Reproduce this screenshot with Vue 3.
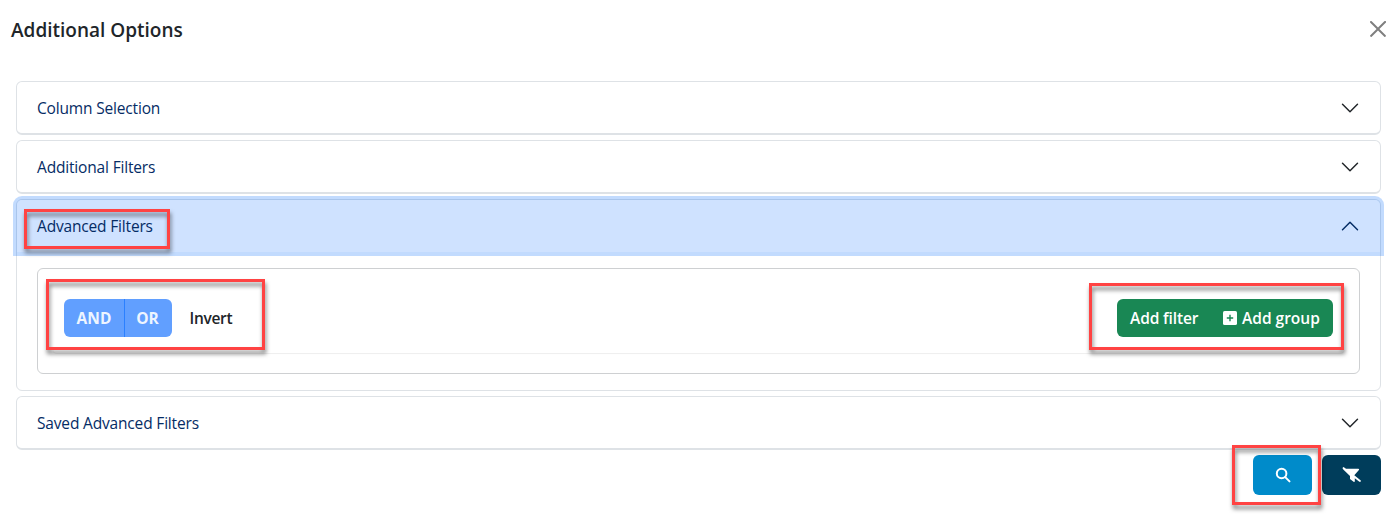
<script setup>
const before = ['Column Selection', 'Additional Filters']
</script>

<template>
  <main class="dialog">
    <header class="head">
      <h1>Additional Options</h1>
      <svg class="close" viewBox="0 0 16 16"><path d="M.3.3a1 1 0 0 1 1.4 0L8 6.6 14.3.3a1 1 0 1 1 1.4 1.4L9.4 8l6.3 6.3a1 1 0 0 1-1.4 1.4L8 9.4l-6.3 6.3a1 1 0 0 1-1.4-1.4L6.6 8 .3 1.7a1 1 0 0 1 0-1.4z" /></svg>
    </header>

    <section class="accordion">
      <div v-for="title in before" :key="title" class="item closed">
        <span>{{ title }}</span>
        <svg class="chev" viewBox="0 0 16 16"><path d="M2 5l6 6 6-6" /></svg>
      </div>

      <div class="item open">
        <div class="toggle">
          <span>Advanced Filters</span>
          <svg class="chev" viewBox="0 0 16 16"><path d="M2 11l6-6 6 6" /></svg>
        </div>
        <div class="body">
          <div class="group">
            <div class="row">
              <div class="logic">
                <button class="and">AND</button>
                <button class="or">OR</button>
              </div>
              <span class="invert">Invert</span>
              <div class="adds">
                <span class="addf">Add filter</span>
                <svg class="plus" viewBox="0 0 14 14"><rect width="14" height="14" rx="1.6" fill="#fff" /><path d="M7 3.8v6.4M3.8 7h6.4" stroke="#198754" stroke-width="1.4" /></svg>
                <span>Add group</span>
              </div>
            </div>
          </div>
        </div>
      </div>

      <div class="item closed">
        <span>Saved Advanced Filters</span>
        <svg class="chev" viewBox="0 0 16 16"><path d="M2 5l6 6 6-6" /></svg>
      </div>
    </section>

    <footer class="actions">
      <button class="search">
        <svg viewBox="0 0 16 16"><circle cx="6.6" cy="6.5" r="4.8" /><path d="M10.2 10.1l4.3 4.3" /></svg>
      </button>
      <button class="clear">
        <svg viewBox="0 0 20 16"><path d="M1.6.1L4 1.7h12.4q1.2.2.5 1.2L12.3 8.3l6.5 5.1q.3.9-.6 1.5l-.8-.1-4.6-3.6v3.3q-.5.7-1.2.2L8 12V8.9L1.3 2.6.4 1.1z" /></svg>
      </button>
    </footer>

    <i class="mark m1"></i>
    <i class="mark m2"></i>
    <i class="mark m3"></i>
    <i class="mark m4"></i>
  </main>
</template>

<style>
body { margin: 0; background: #fff; }
</style>

<style scoped>
* { box-sizing: border-box; }
.dialog {
  position: relative;
  width: 1398px;
  height: 520px;
  overflow: hidden;
  background: #fff;
  font-family: "Open Sans", "Noto Sans", sans-serif;
  font-size: 15.5px;
  letter-spacing: -0.17px;
  line-height: 24px;
  color: #052c65;
}
span { white-space: nowrap; }
.head {
  display: flex;
  justify-content: space-between;
  align-items: flex-start;
  height: 81px;
  padding: 15px 12px 0 11px;
}
h1 {
  margin: 0;
  font-size: 19px;
  line-height: 30px;
  font-weight: 600;
  letter-spacing: 0;
  color: #212529;
}
.close { width: 16px; height: 16px; margin-top: 6px; fill: #7f7f7f; }
.accordion { display: flex; flex-direction: column; gap: 5px; width: 1365px; margin-left: 16px; }
.item { border: 1px solid #dee2e6; border-radius: 6px; }
.closed, .toggle { display: flex; align-items: center; justify-content: space-between; }
.closed { height: 54px; padding: 0 20px; border-bottom-width: 2px; }
.open { height: 192px; }
.toggle {
  position: relative;
  height: 52px;
  padding: 0 20px;
  background: #cfe2ff;
  border-radius: 5px 5px 0 0;
  box-shadow: 0 0 0 4px rgba(13, 110, 253, 0.25);
}
.chev { width: 20px; height: 20px; fill: none; stroke: #212529; stroke-width: 1.15; stroke-linecap: round; stroke-linejoin: round; }
.toggle .chev { stroke: #052c65; }
.body { padding: 16px 20px; }
.group { height: 106px; padding: 15px; border: 1px solid #ced0d2; border-radius: 6px; }
.row {
  display: flex;
  align-items: center;
  height: 69px;
  padding: 0 11px 1px;
  border-radius: 4px;
  box-shadow: 0 1px 1px rgba(0, 0, 0, 0.07);
  font-weight: 600;
  letter-spacing: 0;
}
.logic { display: flex; height: 38px; border-radius: 6px; overflow: hidden; }
button { border: 0; padding: 0; margin: 0; font: inherit; color: #fff; display: flex; align-items: center; justify-content: center; }
.logic button { background: #619fff; color: #eef5ff; font-weight: 700; }
.and { width: 60px; }
.logic .or { width: 48px; padding-right: 2px; border-left: 1px solid #2b80ff; }
.invert { margin-left: 17.5px; letter-spacing: -0.3px; color: #212529; }
.adds {
  display: flex;
  align-items: center;
  width: 216px;
  height: 38px;
  margin-left: auto;
  padding-left: 13px;
  border-radius: 6px;
  background: #198754;
  color: #fff;
}
.addf { width: 93px; letter-spacing: -0.12px; }
.plus { width: 14px; height: 14px; margin-right: 5px; }
.actions { display: flex; justify-content: flex-end; gap: 10px; padding: 5px 17px 0 0; }
.actions button { width: 59px; height: 40px; border-radius: 6px; }
.search { background: #008bca; }
.clear { background: #003d5b; }
.search svg { width: 16px; height: 16px; fill: none; stroke: #fff; stroke-width: 2; stroke-linecap: round; }
.clear svg { width: 20px; height: 16px; fill: #fff; }
.mark {
  position: absolute;
  border: 3px solid #ff4343;
  filter: drop-shadow(1px 4px 2px rgba(0, 0, 0, 0.5));
}
.m1 { left: 24px; top: 209px; width: 146px; height: 40px; }
.m2 { left: 46px; top: 279px; width: 219px; height: 71px; }
.m3 { left: 1089px; top: 283px; width: 255px; height: 67px; }
.m4 { left: 1232px; top: 445px; width: 89px; height: 60px; }
</style>
